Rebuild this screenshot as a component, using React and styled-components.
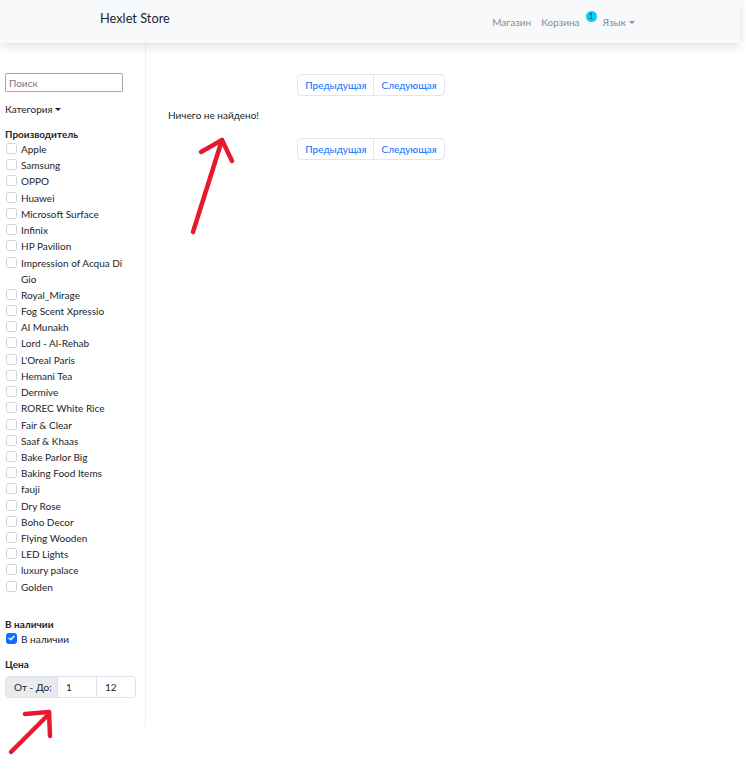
import React from 'react';
import styled, { createGlobalStyle } from 'styled-components';

const GlobalStyle = createGlobalStyle`
  html, body {
    margin: 0;
    padding: 0;
    background: #fff;
  }
  body {
    font-family: Lato, "Liberation Sans", sans-serif;
    font-size: 10px;
    line-height: 16px;
    color: #212529;
  }
  * { box-sizing: border-box; }
`;

const Page = styled.div`
  position: relative;
  width: 740px;
  min-height: 771px;
`;

const Navbar = styled.nav`
  height: 43px;
  background: #f8f9fa;
  box-shadow: 0 3px 10px rgba(0, 0, 0, 0.13);
  position: relative;
  z-index: 1;
`;

const NavContainer = styled.div`
  width: 540px;
  height: 100%;
  margin: 0 auto;
  display: flex;
  align-items: center;
  justify-content: space-between;
  padding-right: 5px;
`;

const Brand = styled.a`
  font-size: 12.8px;
  color: #212529;
  margin-top: -7px;
  text-decoration: none;
`;

const NavLinks = styled.div`
  display: flex;
  align-items: center;
  gap: 10px;
  margin-top: 1px;
`;

const NavLink = styled.a`
  color: #8a8c8f;
  text-decoration: none;
  display: inline-flex;
  align-items: center;
`;

const Badge = styled.span`
  display: inline-block;
  margin-left: 6px;
  margin-right: -4px;
  position: relative;
  top: -6px;
  width: 11px;
  height: 11px;
  border-radius: 50%;
  background: #0dcaf0;
  color: #1a3a4a;
  font-size: 7px;
  line-height: 11px;
  text-align: center;
`;

const Caret = styled.span`
  display: inline-block;
  margin-left: 3px;
  border-top: 3.5px solid currentColor;
  border-left: 3px solid transparent;
  border-right: 3px solid transparent;
  margin-top: 1px;
  color: ${(p) => p.$color || 'inherit'};
`;

const Body = styled.div`
  display: flex;
  align-items: flex-start;
`;

const Sidebar = styled.aside`
  width: 146px;
  flex-shrink: 0;
  border-right: 1px solid #eef0f2;
  padding: 30px 8px 29px 5px;
`;

const Search = styled.input`
  display: block;
  width: 118px;
  height: 19px;
  border: 1px solid #a8a8a8;
  border-radius: 1px;
  padding: 0 3px;
  font: inherit;
  color: #212529;
  &::placeholder { color: #777; }
`;

const Category = styled.div`
  margin-top: 9px;
  display: flex;
  align-items: center;
`;

const Heading = styled.div`
  font-weight: 700;
  margin-top: ${(p) => p.$top || '9px'};
`;

const CheckList = styled.div`
  display: flex;
  flex-direction: column;
  gap: 0.23px;
  margin-top: -1px;
`;

const CheckItem = styled.label`
  display: flex;
  align-items: flex-start;
  gap: 4px;
  padding-left: 1px;
  margin-top: ${(p) => p.$top || '0'};
`;

const Box = styled.span`
  flex-shrink: 0;
  width: 11px;
  height: 11px;
  margin-top: 2px;
  border-radius: 2.5px;
  border: 1px solid ${(p) => (p.$checked ? '#0d6efd' : '#cfd3d7')};
  background: ${(p) => (p.$checked ? '#0d6efd' : '#fff')};
  display: flex;
  align-items: center;
  justify-content: center;
`;

const Label = styled.span`
  width: 106px;
`;

const InputGroup = styled.div`
  display: flex;
  margin-top: 4px;
  height: 22px;
  width: 131px;
  border: 1px solid #dee2e6;
  border-radius: 4px;
  overflow: hidden;
`;

const Addon = styled.span`
  width: 51px;
  background: #e9ecef;
  padding-left: 8px;
  display: flex;
  align-items: center;
`;

const PriceInput = styled.span`
  flex: 1;
  border-left: 1px solid #dee2e6;
  padding-left: 8px;
  display: flex;
  align-items: center;
`;

const Main = styled.main`
  width: 430px;
  padding: 31px 0 0 22px;
`;

const PagerRow = styled.div`
  display: flex;
  justify-content: center;
  padding-right: 2px;
  margin-top: ${(p) => p.$top || '0'};
`;

const Pager = styled.div`
  display: flex;
  height: 22px;
  border: 1px solid #e3e6ea;
  border-radius: 4px;
`;

const PageButton = styled.a`
  color: #0d6efd;
  text-decoration: none;
  display: flex;
  align-items: center;
  padding: 0 7px;
  & + & { border-left: 1px solid #e3e6ea; }
`;

const Empty = styled.p`
  margin: 11px 0 0;
`;

const Annotation = styled.svg`
  position: absolute;
  left: 0;
  top: 0;
  pointer-events: none;
  z-index: 2;
`;

const brands = [
  'Apple', 'Samsung', 'OPPO', 'Huawei', 'Microsoft Surface', 'Infinix',
  'HP Pavilion', 'Impression of Acqua Di Gio', 'Royal_Mirage', 'Fog Scent Xpressio',
  'Al Munakh', 'Lord - Al-Rehab', "L'Oreal Paris", 'Hemani Tea', 'Dermive',
  'ROREC White Rice', 'Fair & Clear', 'Saaf & Khaas', 'Bake Parlor Big',
  'Baking Food Items', 'fauji', 'Dry Rose', 'Boho Decor', 'Flying Wooden',
  'LED Lights', 'luxury palace', 'Golden',
];

function Check({ checked, top, children }) {
  return (
    <CheckItem $top={top}>
      <Box $checked={checked}>
        {checked && (
          <svg width="7" height="6" viewBox="0 0 7 6">
            <path d="M1 3.2 L2.8 4.8 L6 1.2" fill="none" stroke="#fff" strokeWidth="1.4" strokeLinecap="round" strokeLinejoin="round" />
          </svg>
        )}
      </Box>
      <Label>{children}</Label>
    </CheckItem>
  );
}

function Pagination({ top }) {
  return (
    <PagerRow $top={top}>
      <Pager>
        <PageButton>Предыдущая</PageButton>
        <PageButton>Следующая</PageButton>
      </Pager>
    </PagerRow>
  );
}

export default function App() {
  return (
    <Page>
      <GlobalStyle />
      <Navbar>
        <NavContainer>
          <Brand>Hexlet Store</Brand>
          <NavLinks>
            <NavLink>Магазин</NavLink>
            <NavLink>
              Корзина
              <Badge>1</Badge>
            </NavLink>
            <NavLink>
              Язык
              <Caret />
            </NavLink>
          </NavLinks>
        </NavContainer>
      </Navbar>
      <Body>
        <Sidebar>
          <Search placeholder="Поиск" />
          <Category>
            Категория
            <Caret $color="#212529" />
          </Category>
          <Heading>Производитель</Heading>
          <CheckList>
            {brands.map((b) => (
              <Check key={b}>{b}</Check>
            ))}
          </CheckList>
          <Heading $top="21px">В наличии</Heading>
          <Check checked top="-1px">В наличии</Check>
          <Heading $top="9px">Цена</Heading>
          <InputGroup>
            <Addon>От - До:</Addon>
            <PriceInput>1</PriceInput>
            <PriceInput>12</PriceInput>
          </InputGroup>
        </Sidebar>
        <Main>
          <Pagination />
          <Empty>Ничего не найдено!</Empty>
          <Pagination top="15px" />
        </Main>
      </Body>
      <Annotation width="746" height="771" viewBox="0 0 746 771">
        <g fill="none" stroke="#e8192f" strokeWidth="4.5" strokeLinecap="round" strokeLinejoin="round">
          <path d="M193 232 L222 140" />
          <path d="M201 152 L222 140 L232 161" />
          <path d="M11 752 L49 714" />
          <path d="M25 714 L49 712 L50 736" />
        </g>
      </Annotation>
    </Page>
  );
}
